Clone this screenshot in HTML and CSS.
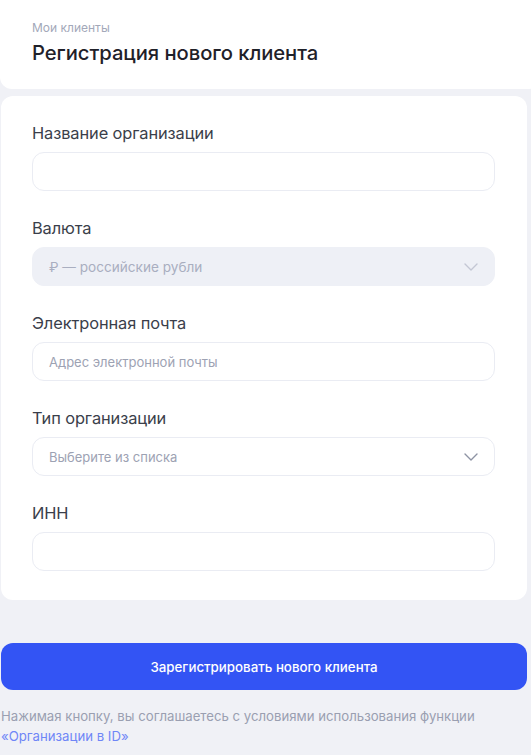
FILE: index.html
```html
<!DOCTYPE html>
<html lang="ru">
<head>
<meta charset="utf-8">
<title>Регистрация нового клиента</title>
<link rel="stylesheet" href="styles.css">
</head>
<body>
<div class="page">
  <header class="head-card">
    <div class="crumb">Мои клиенты</div>
    <h1 class="title">Регистрация нового клиента</h1>
  </header>

  <section class="form-card">
    <div class="field">
      <label class="label">Название организации</label>
      <div class="input"></div>
    </div>
    <div class="field">
      <label class="label">Валюта</label>
      <div class="input select disabled">
        <span class="value">₽ — российские рубли</span>
        <svg class="chev" width="14" height="8" viewBox="0 0 14 8"><path d="M1 1l6 6 6-6" fill="none" stroke="currentColor" stroke-width="1.4" stroke-linecap="round" stroke-linejoin="round"/></svg>
      </div>
    </div>
    <div class="field">
      <label class="label">Электронная почта</label>
      <div class="input"><span class="placeholder">Адрес электронной почты</span></div>
    </div>
    <div class="field">
      <label class="label">Тип организации</label>
      <div class="input select">
        <span class="placeholder">Выберите из списка</span>
        <svg class="chev dark" width="14" height="8" viewBox="0 0 14 8"><path d="M1 1l6 6 6-6" fill="none" stroke="currentColor" stroke-width="1.4" stroke-linecap="round" stroke-linejoin="round"/></svg>
      </div>
    </div>
    <div class="field">
      <label class="label">ИНН</label>
      <div class="input"></div>
    </div>
  </section>

  <button class="submit">Зарегистрировать нового клиента</button>

  <p class="terms">Нажимая кнопку, вы соглашаетесь с условиями использования функции <a class="link" href="#">«Организации в ID»</a></p>
</div>
</body>
</html>
```

FILE: styles.css
```css
html, body {
  margin: 0;
  padding: 0;
  background: #f0f1f6;
}
body {
  font-family: Inter, "Noto Sans", sans-serif;
  color: #22252e;
}
.page {
  width: 531px;
  display: flex;
  flex-direction: column;
}
.head-card {
  background: #fff;
  border-radius: 0 0 12px 12px;
  height: 89px;
  box-sizing: border-box;
  padding: 20px 32px 0;
  margin-right: -10px;
}
.crumb {
  font-size: 12px;
  line-height: 16px;
  color: #a3a8b9;
}
.title {
  margin: 4px 0 0;
  font-size: 20.2px;
  line-height: 26px;
  font-weight: 500;
  color: #1f2129;
  letter-spacing: -0.05px;
}
.form-card {
  margin: 7px 4px 0 1px;
  background: #fff;
  border-radius: 12px;
  padding: 27px 32px 0 31px;
  display: flex;
  flex-direction: column;
  gap: 27px;
  height: 504px;
  box-sizing: border-box;
}
.field {
  display: flex;
  flex-direction: column;
  gap: 9px;
}
.label {
  font-size: 16.4px;
  line-height: 20px;
  color: #3a3e4a;
  letter-spacing: -0.1px;
}
.input {
  height: 39px;
  box-sizing: border-box;
  border: 1px solid #eaecf3;
  border-radius: 12px;
  background: #fff;
  display: flex;
  align-items: center;
  justify-content: space-between;
  padding: 0 15px 0 16px;
}
.input.disabled {
  background: #eef0f6;
  border-color: #eef0f6;
}
.value {
  font-size: 13.6px;
  color: #a9aec0;
}
.placeholder {
  font-size: 13px;
  color: #9da2b3;
}
.chev {
  color: #c3c7d4;
  margin-right: 1px;
}
.chev.dark {
  color: #8e93a4;
}
.submit {
  margin: 43px 4px 0 1px;
  height: 47px;
  border: none;
  border-radius: 12px;
  background: #3354f4;
  color: #fff;
  font-family: Inter, "Noto Sans", sans-serif;
  font-size: 13.3px;
  font-weight: 500;
  padding: 0;
}
.terms {
  margin: 16px 0 0 1px;
  font-size: 13.2px;
  line-height: 20px;
  color: #9a9fb1;
  padding-right: 40px;
}
.link {
  color: #6f86f7;
  text-decoration: none;
}
```
